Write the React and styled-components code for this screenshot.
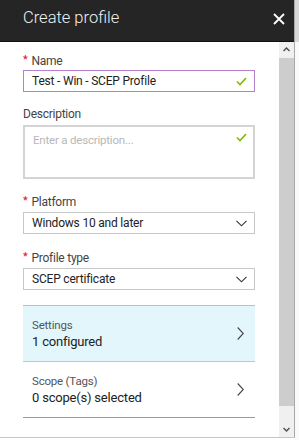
import React from 'react'
import styled, { createGlobalStyle } from 'styled-components'

const GlobalStyle = createGlobalStyle`
	html, body {
		margin: 0;
		padding: 0;
		background: #fff;
	}
	body {
		font-family: Roboto, "Open Sans", "Liberation Sans", sans-serif;
		color: #333;
	}
`

const Frame = styled.div`
	display: flex;
	width: 299px;
	height: 440px;
	overflow: hidden;
	background: #fff;
`

const Blade = styled.div`
	display: flex;
	flex-direction: column;
	width: 295px;
	height: 438px;
	border-right: 1px solid #a8a8a8;
	border-bottom: 1px solid #c6c6c6;
	box-sizing: border-box;
`

const Strip = styled.div`
	flex: 1;
	background: #fafafa;
	border-top: 42px solid #d8d8d8;
`

const Header = styled.div`
	display: flex;
	align-items: center;
	justify-content: space-between;
	height: 42px;
	padding: 0 9px 6px 23px;
	box-sizing: border-box;
	background: #252525;
	border-bottom: 1px solid #111;
	flex-shrink: 0;
`

const Title = styled.h1`
	margin: 0;
	font-size: 16.5px;
	font-weight: 300;
	color: #f2f2f2;
`

const CloseButton = styled.button`
	display: flex;
	padding: 0;
	margin-top: 2px;
	border: 0;
	background: none;
	cursor: pointer;
`

const Body = styled.div`
	display: flex;
	flex: 1;
	min-height: 0;
`

const Content = styled.div`
	flex: 1;
	padding: 11px 24px 0 23px;
	display: flex;
	flex-direction: column;
`

const Field = styled.div`
	display: flex;
	flex-direction: column;
	margin-bottom: ${p => p.$gap}px;
`

const Label = styled.label`
	display: flex;
	align-items: center;
	height: 16px;
	margin-bottom: ${p => p.$space || 1}px;
	font-size: 12px;
	letter-spacing: -0.25px;
	color: #444;
`

const Star = styled.span`
	color: #e00b1c;
	font-size: 11px;
	margin-right: 4px;
	margin-top: -3px;
`

const Box = styled.div`
	display: flex;
	align-items: ${p => (p.$tall ? 'flex-start' : 'center')};
	justify-content: space-between;
	height: ${p => p.$h || 22}px;
	padding: ${p => (p.$tall ? '6px 6px 0 8px' : '0 7px 0 8px')};
	box-sizing: border-box;
	border: ${p => (p.$thick ? 2 : 1)}px solid ${p => p.$border || '#c8c8c8'};
	font-size: 12px;
	letter-spacing: -0.2px;
	color: #222;
`

const Placeholder = styled.span`
	color: #b8b8b8;
	font-size: 11.5px;
	letter-spacing: -0.2px;
`

const NavList = styled.div`
	display: flex;
	flex-direction: column;
	border-top: 1px solid #bdbdbd;
`

const NavRow = styled.div`
	display: flex;
	align-items: center;
	justify-content: space-between;
	height: 56px;
	padding: 0 11px 0 9px;
	box-sizing: border-box;
	background: ${p => (p.$active ? '#e3f6fc' : '#fff')};
	border-bottom: 1px solid ${p => (p.$last ? '#9a9a9a' : '#c4c4c4')};
	cursor: pointer;
`

const NavText = styled.div`
	display: flex;
	flex-direction: column;
	gap: 2px;
`

const NavTitle = styled.span`
	font-size: 11.5px;
	letter-spacing: -0.2px;
	color: #555;
`

const NavValue = styled.span`
	font-size: 13px;
	letter-spacing: -0.2px;
	color: #222;
`

const Scrollbar = styled.div`
	display: flex;
	flex-direction: column;
	width: 15px;
	background: #f0f0f0;
`

const ScrollArrow = styled.div`
	display: flex;
	align-items: center;
	justify-content: center;
	height: 16px;
`

const Thumb = styled.div`
	height: 354px;
	background: #cdcdcd;
`

const Check = () => (
	<svg width="11" height="9" viewBox="0 0 11 9" fill="none">
		<path d="M1 4.5 L4 7.5 L10 1" stroke="#7fba00" strokeWidth="1.6" />
	</svg>
)

const ChevronDown = () => (
	<svg width="11" height="7" viewBox="0 0 11 7" fill="none">
		<path d="M0.5 0.8 L5.5 5.8 L10.5 0.8" stroke="#333" strokeWidth="1.1" />
	</svg>
)

const ChevronRight = () => (
	<svg width="7" height="13" viewBox="0 0 7 13" fill="none">
		<path d="M0.7 0.5 L6.3 6.5 L0.7 12.5" stroke="#444" strokeWidth="1.1" />
	</svg>
)

const Close = () => (
	<svg width="12" height="12" viewBox="0 0 12 12" fill="none">
		<path d="M1 1 L11 11 M11 1 L1 11" stroke="#fff" strokeWidth="1.8" />
	</svg>
)

const Caret = ({ up }) => (
	<svg width="7" height="5" viewBox="0 0 7 5" fill="none">
		<path d={up ? 'M0.5 4 L3.5 1 L6.5 4' : 'M0.5 1 L3.5 4 L6.5 1'} stroke="#555" strokeWidth="1.5" />
	</svg>
)

const App = () => {
	return (
		<Frame>
			<GlobalStyle />
			<Blade>
				<Header>
					<Title>Create profile</Title>
					<CloseButton aria-label="Close"><Close /></CloseButton>
				</Header>
				<Body>
					<Content>
						<Field $gap={14}>
							<Label><Star>*</Star>Name</Label>
							<Box $border="#b67fd0">
								Test - Win - SCEP Profile
								<Check />
							</Box>
						</Field>
						<Field $gap={15}>
							<Label $space={3}>Description</Label>
							<Box $tall $thick $h={54} $border="#d4d4d4">
								<Placeholder>Enter a description...</Placeholder>
								<Check />
							</Box>
						</Field>
						<Field $gap={16}>
							<Label $space={2}><Star>*</Star>Platform</Label>
							<Box>
								Windows 10 and later
								<ChevronDown />
							</Box>
						</Field>
						<Field $gap={15}>
							<Label $space={2}><Star>*</Star>Profile type</Label>
							<Box>
								SCEP certificate
								<ChevronDown />
							</Box>
						</Field>
						<NavList>
							<NavRow $active>
								<NavText>
									<NavTitle>Settings</NavTitle>
									<NavValue>1 configured</NavValue>
								</NavText>
								<ChevronRight />
							</NavRow>
							<NavRow $last>
								<NavText>
									<NavTitle>Scope (Tags)</NavTitle>
									<NavValue>0 scope(s) selected</NavValue>
								</NavText>
								<ChevronRight />
							</NavRow>
						</NavList>
					</Content>
					<Scrollbar>
						<ScrollArrow><Caret up /></ScrollArrow>
						<Thumb />
						<ScrollArrow />
						<ScrollArrow><Caret /></ScrollArrow>
					</Scrollbar>
				</Body>
			</Blade>
			<Strip />
		</Frame>
	)
}

export default App
